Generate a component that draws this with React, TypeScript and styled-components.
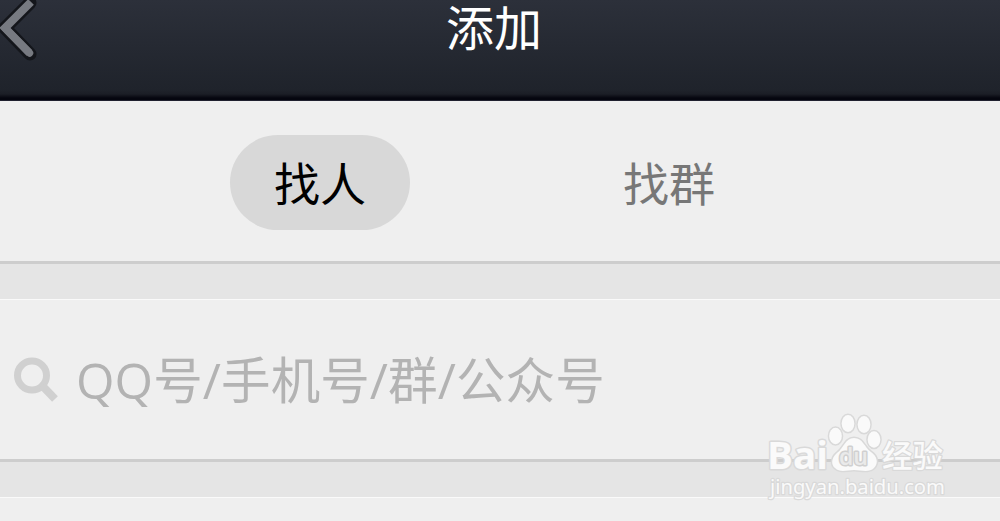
import styled, { createGlobalStyle } from 'styled-components'

const GlobalStyle = createGlobalStyle`
  body {
    margin: 0;
    background: #efefef;
    font-family: 'Open Sans', 'Noto Sans CJK SC', sans-serif;
  }
`

const Screen = styled.div`
  position: relative;
  height: 521px;
  overflow: hidden;
  background: #efefef;
`

const Header = styled.header`
  display: grid;
  grid-template-columns: 60px 1fr 72px;
  height: 101px;
  box-sizing: border-box;
  border-bottom: 1px solid #20212f;
  background: linear-gradient(#2c303a 0, #1f232b 90px, #1b1e26 94px, #05060f 98px, #05060f 100px);
`

const BackIcon = styled.svg`
  width: 60px;
  height: 64px;
`

const Title = styled.h1`
  margin: 0;
  color: #fff;
  font-size: 48px;
  font-weight: 400;
  line-height: 56px;
  text-align: center;
`

const Tabs = styled.nav`
  display: flex;
  gap: 169px;
  height: 160px;
  box-sizing: border-box;
  padding: 34px 0 0 230px;
`

const Tab = styled.button<{ $active?: boolean }>`
  width: 180px;
  height: 95px;
  padding: 0;
  border: 0;
  border-radius: 48px;
  background: ${(props) => (props.$active ? '#d8d8d8' : 'transparent')};
  color: ${(props) => (props.$active ? '#000' : '#777')};
  font-family: inherit;
  font-size: 46px;
  font-weight: 400;
  line-height: 94px;
`

const Separator = styled.div`
  height: 39px;
  box-sizing: border-box;
  border-top: 3px solid #cdcdcd;
  border-bottom: 1px solid #fafafa;
  background: #e5e5e5;
`

const SearchRow = styled.div`
  display: flex;
  align-items: center;
  height: 159px;
  padding-left: 12px;
`

const SearchIcon = styled.svg`
  width: 48px;
  height: 48px;
  margin-right: 16px;
`

const Placeholder = styled.span`
  padding-top: 1px;
  color: #b3b3b3;
  font-size: 49.5px;
  font-weight: 380;
  letter-spacing: 0.1px;
  line-height: 70px;
  white-space: nowrap;
`

const Watermark = styled.svg`
  position: absolute;
  left: 760px;
  top: 406px;
  width: 200px;
  height: 100px;
`

const App = () => (
  <>
    <GlobalStyle />
    <Screen>
      <Header>
        <BackIcon viewBox="0 0 60 64" fill="none">
          <path d="M30 3L5 28L30 54" stroke="#14161b" strokeWidth="13" strokeLinecap="round" />
          <path d="M31 2L5 28L29.5 53" stroke="#777a81" strokeWidth="8" />
          <path d="M5 28L29.5 53" stroke="#777a81" strokeWidth="7.5" strokeLinecap="round" />
        </BackIcon>
        <Title>添加</Title>
      </Header>
      <Tabs>
        <Tab $active>找人</Tab>
        <Tab>找群</Tab>
      </Tabs>
      <Separator />
      <SearchRow>
        <SearchIcon viewBox="0 0 48 48" fill="none" stroke="#d0d0d0">
          <circle cx="20" cy="19.5" r="14.5" strokeWidth="7" />
          <path d="M30 29.5L43 43" strokeWidth="8" />
        </SearchIcon>
        <Placeholder>QQ号/手机号/群/公众号</Placeholder>
      </SearchRow>
      <Separator />
      <Watermark
        viewBox="0 0 200 100"
        fill="#fafafa"
        stroke="#d9d9d9"
        strokeWidth="3"
        paintOrder="stroke"
        strokeLinejoin="round"
      >
        <text x="7" y="63" fontFamily="Open Sans" fontSize="38" fontWeight="700" textLength="61" lengthAdjust="spacingAndGlyphs">Bai</text>
        <ellipse cx="75.5" cy="30" rx="6.3" ry="8.3" />
        <ellipse cx="88" cy="17.5" rx="6.3" ry="8.5" />
        <ellipse cx="104" cy="18.5" rx="6.3" ry="8.5" />
        <ellipse cx="114" cy="33.5" rx="6.3" ry="8.3" />
        <path d="M94 32C85 32 84 42 77 47C71 52 71 59 75 62C80 67 87 64 94 64C101 64 109 67 114 62C119 57 117 50 111 46C104 41 103 32 94 32Z" />
        <text x="79" y="59" fill="#eaeaea" stroke="#d0d0d0" fontFamily="Open Sans" fontSize="23" fontWeight="600" textLength="29" lengthAdjust="spacingAndGlyphs">du</text>
        <text x="122" y="61" strokeWidth="2.5" fontFamily="Noto Sans CJK SC" fontSize="31" fontWeight="500" textLength="61" lengthAdjust="spacingAndGlyphs">经验</text>
        <text x="10" y="87.5" strokeWidth="2.4" fontFamily="Noto Sans" fontSize="20" textLength="175" lengthAdjust="spacingAndGlyphs">jingyan.baidu.com</text>
      </Watermark>
    </Screen>
  </>
)

export default App
